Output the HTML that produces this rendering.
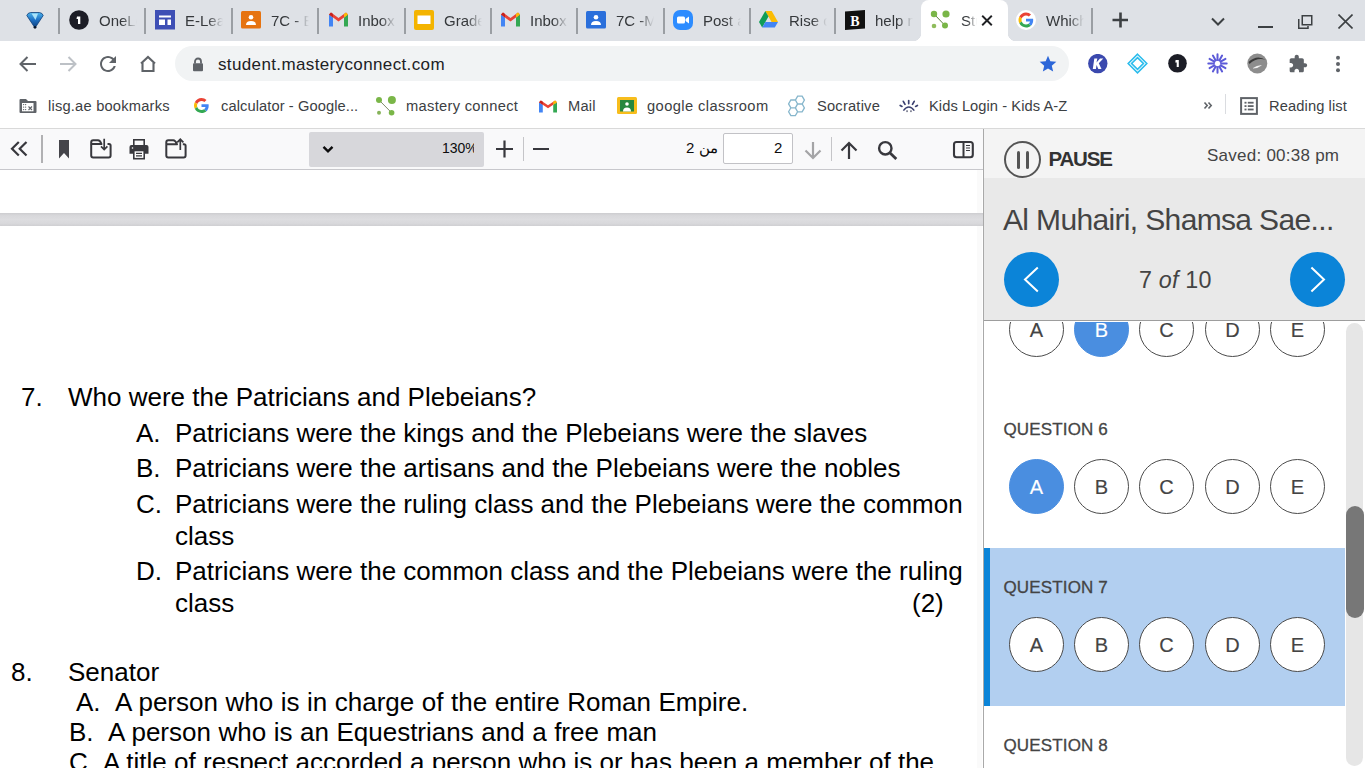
<!DOCTYPE html>
<html><head><meta charset="utf-8">
<style>
*{margin:0;padding:0;box-sizing:border-box}
html,body{width:1365px;height:768px;overflow:hidden;background:#fff;font-family:"Liberation Sans",sans-serif}
.a{position:absolute}
#tabs{left:0;top:0;width:1365px;height:41px;background:#dee1e6}
.sep{position:absolute;top:8px;width:2px;height:26px;background:#9a9ea3}
.tt{position:absolute;top:11px;height:20px;font-size:15px;line-height:20px;color:#35383b;white-space:nowrap;overflow:hidden;
 -webkit-mask-image:linear-gradient(to right,#000 60%,transparent 100%)}
.ico{position:absolute}
#toolbar{left:0;top:41px;width:1365px;height:46px;background:#fff}
#omni{left:175px;top:46px;width:894px;height:35px;border-radius:18px;background:#f1f3f4}
#bm{left:0;top:87px;width:1365px;height:42px;background:#fff;border-bottom:1px solid #d9d9d9}
.bt{position:absolute;top:97px;letter-spacing:0.2px;font-size:14.7px;line-height:18px;color:#3c4043;white-space:nowrap}
#pdftb{left:0;top:129px;width:983px;height:41px;background:#f9f9fa;border-bottom:1px solid #c8c8cc}
#pdf{left:0;top:170px;width:983px;height:598px;background:#fff}
#band{left:0;top:213px;width:983px;height:13px;background:linear-gradient(#cdcdd0,#d8d8db 20%,#dddde0 50%,#d8d8db 80%,#cfcfd2)}
.pt{position:absolute;font-size:26px;line-height:30px;color:#000;white-space:nowrap}
#panel{left:983px;top:129px;width:382px;height:639px;background:#fff;border-left:1px solid #a9a9a9}
#ph{left:984px;top:129px;width:381px;height:49px;background:#f4f4f4}
#pn{left:984px;top:178px;width:381px;height:143px;background:#e9e9e9;border-bottom:1px solid #9d9d9d}
.circ{position:absolute;width:55px;height:55px;border-radius:50%;border:1px solid #4a4a4a;background:#fff;color:#444;-webkit-text-stroke:0.15px currentColor;font-size:20px;line-height:54px;text-align:center}
.sel{background:#4a8ee0;border-color:#4a8ee0;color:#fff}
.ql{position:absolute;left:1003.5px;font-size:17px;line-height:20px;letter-spacing:0.15px;color:#444;white-space:nowrap;-webkit-text-stroke:0.3px #444}
</style></head><body>

<!-- TAB STRIP -->
<div id="tabs" class="a"></div>
<div class="a" style="left:921px;top:0;width:87px;height:41px;background:#fff;border-radius:8px 8px 0 0"></div>
<div class="a" style="left:913px;top:33px;width:8px;height:8px;background:radial-gradient(circle at 0 0, transparent 8px, #fff 8.5px)"></div>
<div class="a" style="left:1008px;top:33px;width:8px;height:8px;background:radial-gradient(circle at 100% 0, transparent 8px, #fff 8.5px)"></div>
<div class="sep" style="left:58px"></div>
<div class="sep" style="left:144px"></div>
<div class="sep" style="left:231px"></div>
<div class="sep" style="left:317px"></div>
<div class="sep" style="left:404px"></div>
<div class="sep" style="left:490px"></div>
<div class="sep" style="left:576px"></div>
<div class="sep" style="left:663px"></div>
<div class="sep" style="left:749px"></div>
<div class="sep" style="left:834px"></div>
<div class="sep" style="left:1091px"></div>
<div class="tt" style="left:99px;width:38px">OneLogin</div>
<div class="tt" style="left:185px;width:38px">E-Learning</div>
<div class="tt" style="left:271px;width:38px">7C - English</div>
<div class="tt" style="left:358px;width:38px">Inbox (12)</div>
<div class="tt" style="left:444px;width:38px">Grades</div>
<div class="tt" style="left:530px;width:38px">Inbox (3)</div>
<div class="tt" style="left:616px;width:38px">7C -Math</div>
<div class="tt" style="left:703px;width:38px">Post attendance</div>
<div class="tt" style="left:789px;width:38px">Rise of Rome</div>
<div class="tt" style="left:875px;width:38px">help me</div>
<div class="tt" style="left:1046px;width:38px">Which</div>
<div class="tt" style="left:961px;width:16px;-webkit-mask-image:linear-gradient(to right,#000 40%,transparent 100%)">Student</div>
<!-- pinned diamond -->
<svg class="ico" style="left:26px;top:11px" width="18" height="18" viewBox="0 0 18 18">
 <defs><linearGradient id="dg" x1="0" y1="0" x2="0" y2="1"><stop offset="0" stop-color="#4fb4ea"/><stop offset="0.45" stop-color="#1f74c8"/><stop offset="1" stop-color="#0b3a78"/></linearGradient></defs>
 <path d="M0.8 4.5 Q1.5 2 4.5 1.5 H13.5 Q16.5 2 17.2 4.5 L9 17 Z" fill="url(#dg)" stroke="#0d3f7a" stroke-width="0.8"/>
 <path d="M5.5 2.5 H12 L9.5 9 Z" fill="#bdf0ff" opacity="0.85"/>
 <circle cx="9" cy="16.3" r="1.4" fill="#07162b"/>
</svg>
<!-- OneLogin -->
<svg class="ico" style="left:69px;top:10px" width="20" height="20" viewBox="0 0 20 20"><circle cx="10" cy="10" r="9.8" fill="#1c1d26"/><path d="M8 6.5 H11.3 V14 H9 V9 H7.5 Z" fill="#fff"/></svg>
<!-- E-Learning -->
<svg class="ico" style="left:155px;top:10px" width="20" height="20" viewBox="0 0 20 20"><rect x="0" y="0" width="20" height="19.5" fill="#3e4fb5"/><rect x="4" y="5.5" width="12" height="2" fill="#fff"/><rect x="4" y="9.5" width="6" height="5.5" fill="#fff"/><rect x="12.5" y="9.5" width="3.5" height="5.5" fill="#fff"/></svg>
<!-- 7C orange classroom -->
<svg class="ico" style="left:241px;top:11px" width="20" height="18" viewBox="0 0 20 18"><rect x="0" y="0" width="20" height="17.5" rx="1.5" fill="#e67310"/><circle cx="10" cy="6.3" r="2.3" fill="#fff"/><path d="M5 14 Q5 10 10 10 Q15 10 15 14 Z" fill="#fff"/></svg>
<!-- gmail -->
<svg class="ico" style="left:329px;top:12px" width="19" height="15" viewBox="0 0 19 15">
 <path d="M0 2.5 V14.5 H4 V5.5 Z" fill="#4285f4"/><path d="M15 5.5 V14.5 H19 V2.5 Z" fill="#34a853"/>
 <path d="M0 2.5 L9.5 9.5 L19 2.5 L17 0.5 L9.5 6 L2 0.5 Z" fill="#ea4335"/><path d="M15 5.5 L19 2.5 L17 0.5 L15 2 Z" fill="#fbbc04"/><path d="M0 2.5 L4 5.5 V2 L2 0.5 Z" fill="#c5221f"/>
</svg>
<!-- slides yellow -->
<svg class="ico" style="left:414px;top:10px" width="20" height="20" viewBox="0 0 20 20"><rect x="0" y="0" width="20" height="20" rx="2" fill="#f4b400"/><rect x="3.5" y="5.5" width="13" height="8.5" fill="#fff"/></svg>
<svg class="ico" style="left:501px;top:12px" width="19" height="15" viewBox="0 0 19 15">
 <path d="M0 2.5 V14.5 H4 V5.5 Z" fill="#4285f4"/><path d="M15 5.5 V14.5 H19 V2.5 Z" fill="#34a853"/>
 <path d="M0 2.5 L9.5 9.5 L19 2.5 L17 0.5 L9.5 6 L2 0.5 Z" fill="#ea4335"/><path d="M15 5.5 L19 2.5 L17 0.5 L15 2 Z" fill="#fbbc04"/><path d="M0 2.5 L4 5.5 V2 L2 0.5 Z" fill="#c5221f"/>
</svg>
<!-- blue classroom -->
<svg class="ico" style="left:586px;top:11px" width="20" height="18" viewBox="0 0 20 18"><rect x="0" y="0" width="20" height="17.5" rx="1.5" fill="#2a6fdb"/><circle cx="10" cy="6.3" r="2.3" fill="#fff"/><path d="M5 14 Q5 10 10 10 Q15 10 15 14 Z" fill="#fff"/></svg>
<!-- zoom -->
<svg class="ico" style="left:673px;top:10px" width="20" height="20" viewBox="0 0 20 20"><rect x="0" y="0" width="20" height="20" rx="7" fill="#2d8cff"/><rect x="4" y="6.5" width="8" height="7" rx="1.5" fill="#fff"/><path d="M12.5 9 L16 6.5 V13.5 L12.5 11 Z" fill="#fff"/></svg>
<!-- drive -->
<svg class="ico" style="left:759px;top:11px" width="19" height="17" viewBox="0 0 19 17">
 <path d="M6.3 0 H12.7 L19 11 H12.6 Z" fill="#fbbc04"/><path d="M6.3 0 L0 11 L3.2 16.5 L9.5 5.5 Z" fill="#0f9d58"/><path d="M3.2 16.5 H15.8 L19 11 H6.4 Z" fill="#4285f4"/>
</svg>
<!-- B black -->
<svg class="ico" style="left:845px;top:10px" width="20" height="20" viewBox="0 0 20 20"><path d="M0 1.5 L20 0 V18.5 L0 20 Z" fill="#111"/><text x="10" y="15.5" text-anchor="middle" font-family="Liberation Serif" font-weight="bold" font-size="14" fill="#fff">B</text></svg>
<!-- mastery green (active) -->
<svg class="ico" style="left:930px;top:10px" width="21" height="20" viewBox="0 0 21 20"><path d="M4 4 L15 15.5" stroke="#5a7d3a" stroke-width="1" /><circle cx="4" cy="4" r="3.2" fill="#7ab648"/><circle cx="16" cy="4" r="3.6" fill="#7ab648"/><circle cx="4" cy="16" r="2.3" fill="#8fbc5c"/><circle cx="15" cy="15.5" r="3" fill="#7ab648"/></svg>
<!-- close X -->
<svg class="ico" style="left:981px;top:14.5px" width="12" height="11" viewBox="0 0 12 11"><path d="M1.2 0.8 L10.8 10.2 M10.8 0.8 L1.2 10.2" stroke="#202124" stroke-width="1.9"/></svg>
<!-- G -->
<svg class="ico" style="left:1016px;top:10px" width="20" height="20" viewBox="0 0 48 48"><circle cx="24" cy="24" r="24" fill="#fff"/><g transform="translate(6 6) scale(0.75)">
 <path fill="#EA4335" d="M24 9.5c3.54 0 6.71 1.22 9.21 3.6l6.85-6.85C35.9 2.38 30.47 0 24 0 14.62 0 6.51 5.38 2.56 13.22l7.98 6.19C12.43 13.72 17.74 9.5 24 9.5z"/>
 <path fill="#4285F4" d="M46.98 24.55c0-1.57-.15-3.09-.38-4.55H24v9.02h12.94c-.58 2.96-2.26 5.48-4.78 7.18l7.73 6c4.51-4.18 7.09-10.36 7.09-17.65z"/>
 <path fill="#FBBC05" d="M10.53 28.59c-.48-1.45-.76-2.99-.76-4.59s.27-3.14.76-4.59l-7.98-6.19C.92 16.46 0 20.12 0 24c0 3.88.92 7.54 2.56 10.78l7.97-6.19z"/>
 <path fill="#34A853" d="M24 48c6.48 0 11.93-2.13 15.89-5.81l-7.73-6c-2.15 1.45-4.92 2.3-8.16 2.3-6.26 0-11.57-4.22-13.47-9.91l-7.98 6.19C6.51 42.62 14.62 48 24 48z"/></g></svg>
<!-- new tab + -->
<svg class="ico" style="left:1112px;top:12px" width="17" height="16" viewBox="0 0 17 16"><path d="M8.5 0.5 V15.5 M0.5 8 H16" stroke="#3c4043" stroke-width="2.6"/></svg>
<!-- tab search chevron -->
<svg class="ico" style="left:1211px;top:17px" width="14" height="9" viewBox="0 0 14 9"><path d="M1 1.5 L7 7.5 L13 1.5" fill="none" stroke="#3c4043" stroke-width="2"/></svg>
<!-- window controls -->
<div class="a" style="left:1258px;top:26px;width:15px;height:1.5px;background:#3c4043"></div>
<svg class="ico" style="left:1298px;top:15px" width="15" height="14" viewBox="0 0 15 14"><path d="M0.75 4 V13.25 H10 V11" fill="none" stroke="#3c4043" stroke-width="1.5"/><rect x="4.25" y="0.75" width="9.5" height="9" fill="none" stroke="#3c4043" stroke-width="1.5"/></svg>
<svg class="ico" style="left:1338px;top:14px" width="15" height="15" viewBox="0 0 15 15"><path d="M0.5 0.5 L14.5 14.5 M14.5 0.5 L0.5 14.5" stroke="#3c4043" stroke-width="1.6"/></svg>

<!-- TOOLBAR -->
<div id="toolbar" class="a"></div>
<div id="omni" class="a"></div>

<!-- nav icons -->
<svg class="ico" style="left:16px;top:52px" width="24" height="24" viewBox="0 0 24 24"><path d="M20 12 H5.5 M11.5 5 L4.5 12 L11.5 19" fill="none" stroke="#5f6368" stroke-width="2"/></svg>
<svg class="ico" style="left:56px;top:52px" width="24" height="24" viewBox="0 0 24 24"><path d="M4 12 H18.5 M12.5 5 L19.5 12 L12.5 19" fill="none" stroke="#bdc1c6" stroke-width="2"/></svg>
<svg class="ico" style="left:96px;top:52px" width="24" height="24" viewBox="0 0 24 24"><path d="M17.65 6.35C16.2 4.9 14.21 4 12 4c-4.42 0-7.99 3.58-7.99 8s3.57 8 7.99 8c3.73 0 6.84-2.55 7.73-6h-2.08c-.82 2.33-3.04 4-5.65 4-3.31 0-6-2.69-6-6s2.69-6 6-6c1.66 0 3.140.69 4.220 1.78L13 11h7V4l-2.35 2.35z" fill="#5f6368"/></svg>
<svg class="ico" style="left:136px;top:52px" width="24" height="24" viewBox="0 0 24 24"><path d="M5 11.5 L12 5 L19 11.5 M6.5 10 V19 H17.5 V10" fill="none" stroke="#5f6368" stroke-width="2.1" stroke-linejoin="miter"/></svg>
<!-- lock -->
<svg class="ico" style="left:192px;top:57px" width="12" height="15" viewBox="0 0 12 15"><path d="M3 6.5 V4.5 A3 3 0 0 1 9 4.5 V6.5" fill="none" stroke="#5f6368" stroke-width="1.8"/><rect x="1" y="6.3" width="10" height="8" rx="1" fill="#5f6368"/></svg>
<!-- star -->
<svg class="ico" style="left:1038px;top:54px" width="20" height="20" viewBox="0 0 24 24"><path d="M12 17.27L18.18 21l-1.64-7.030L22 9.24l-7.19-.61L12 2 9.19 8.63 2 9.24l5.46 4.73L5.82 21z" fill="#2c66d8"/></svg>
<!-- ext K -->
<svg class="ico" style="left:1088px;top:54px" width="20" height="20" viewBox="0 0 20 20"><circle cx="9.8" cy="9.6" r="9.7" fill="#3b49ae"/><path d="M6.3 4.5 H9.3 L8.5 8.5 L12 4.5 H15.3 L10.8 9.3 L13.5 15 H10.3 L8.6 11 L7.9 15 H4.8 Z" fill="#fff"/></svg>
<!-- ext diamond -->
<svg class="ico" style="left:1127px;top:53px" width="21" height="21" viewBox="0 0 21 21"><path d="M10.5 1.2 L19.8 10.5 L10.5 19.8 L1.2 10.5 Z" fill="none" stroke="#2bbcec" stroke-width="1.6"/><path d="M10.5 4.6 L16.4 10.5 L10.5 16.4 L4.6 10.5 Z" fill="none" stroke="#2bbcec" stroke-width="1.6"/></svg>
<!-- ext 1 -->
<svg class="ico" style="left:1168px;top:54px" width="19" height="19" viewBox="0 0 19 19"><circle cx="9.5" cy="9.3" r="9.3" fill="#1c1d26"/><path d="M7.6 6 H10.8 V13 H8.7 V8.4 H7.3 Z" fill="#fff"/></svg>
<!-- ext asterisk -->
<svg class="ico" style="left:1207px;top:53px" width="21" height="21" viewBox="0 0 21 21"><path d="M14.10 10.50 L19.70 10.50 M13.62 12.30 L18.47 15.10 M12.30 13.62 L15.10 18.47 M10.50 14.10 L10.50 19.70 M8.70 13.62 L5.90 18.47 M7.38 12.30 L2.53 15.10 M6.90 10.50 L1.30 10.50 M7.38 8.70 L2.53 5.90 M8.70 7.38 L5.90 2.53 M10.50 6.90 L10.50 1.30 M12.30 7.38 L15.10 2.53 M13.62 8.70 L18.47 5.90" stroke="#5c5ad8" stroke-width="2" stroke-linecap="round"/></svg>
<!-- ext grey -->
<svg class="ico" style="left:1247px;top:53px" width="21" height="21" viewBox="0 0 21 21"><circle cx="10.3" cy="10.5" r="10" fill="#8d8d8d"/><path d="M1.5 9 Q10 1 19 7 Q10 4 2.5 11 Z" fill="#3a3a3a"/><path d="M6 15 Q11 11.5 15 12.3 Q11 15.5 6 15.5 Z" fill="#f0f0f0"/></svg>
<!-- puzzle -->
<svg class="ico" style="left:1288px;top:54px" width="20" height="20" viewBox="0 0 24 24"><path d="M20.5 11H19V7c0-1.1-.9-2-2-2h-4V3.5C13 2.12 11.88 1 10.5 1S8 2.12 8 3.5V5H4c-1.1 0-1.99.9-1.99 2v3.8H3.5c1.49 0 2.7 1.21 2.7 2.7s-1.21 2.7-2.7 2.7H2V20c0 1.1.9 2 2 2h3.8v-1.5c0-1.49 1.21-2.7 2.7-2.7 1.49 0 2.7 1.21 2.7 2.7V22H17c1.1 0 2-.9 2-2v-4h1.5c1.38 0 2.5-1.12 2.5-2.5S21.88 11 20.5 11z" fill="#5f6368"/></svg>
<!-- menu dots -->
<svg class="ico" style="left:1335px;top:55px" width="6" height="18" viewBox="0 0 6 18"><circle cx="3" cy="2.7" r="2" fill="#5f6368"/><circle cx="3" cy="9" r="2" fill="#5f6368"/><circle cx="3" cy="15.3" r="2" fill="#5f6368"/></svg>
<div class="a" style="left:218px;top:54.5px;font-size:17px;line-height:20px;letter-spacing:0.37px;color:#202124">student.masteryconnect.com</div>

<!-- BOOKMARKS -->
<div id="bm" class="a"></div>

<!-- bookmark icons -->
<svg class="ico" style="left:19px;top:98px" width="18" height="16" viewBox="0 0 18 16"><path d="M1.5 1 H7 L9 3 H16.5 Q17.5 3 17.5 4 V14 Q17.5 15 16.5 15 H1.5 Q0.5 15 0.5 14 V2 Q0.5 1 1.5 1 Z" fill="#5f6368"/><rect x="3" y="5" width="11.5" height="8.3" fill="#fff"/>
<g fill="#5f6368"><circle cx="4.6" cy="6.6" r="0.7"/><circle cx="6.6" cy="6.6" r="0.7"/><circle cx="4.6" cy="9.1" r="0.7"/><circle cx="6.6" cy="9.1" r="0.7"/><circle cx="4.6" cy="11.6" r="0.7"/><circle cx="6.6" cy="11.6" r="0.7"/></g><path d="M9.5 8.5 L13 12 M13 8.5 L9.5 12" stroke="#5f6368" stroke-width="1.1"/></svg>
<svg class="ico" style="left:193.5px;top:98px" width="15" height="15" viewBox="0 0 48 48"><g>
 <path fill="#EA4335" d="M24 9.5c3.54 0 6.71 1.22 9.21 3.6l6.85-6.85C35.9 2.38 30.47 0 24 0 14.62 0 6.51 5.38 2.56 13.22l7.98 6.19C12.43 13.72 17.74 9.5 24 9.5z"/>
 <path fill="#4285F4" d="M46.98 24.55c0-1.57-.15-3.090-.38-4.55H24v9.02h12.94c-.58 2.96-2.26 5.48-4.78 7.18l7.73 6c4.51-4.18 7.09-10.36 7.09-17.65z"/>
 <path fill="#FBBC05" d="M10.53 28.59c-.48-1.450-.76-2.99-.76-4.59s.27-3.14.76-4.59l-7.98-6.19C.92 16.46 0 20.12 0 24c0 3.88.92 7.54 2.56 10.78l7.97-6.19z"/>
 <path fill="#34A853" d="M24 48c6.48 0 11.93-2.13 15.89-5.81l-7.73-6c-2.15 1.45-4.92 2.3-8.16 2.3-6.26 0-11.57-4.22-13.47-9.91l-7.98 6.19C6.51 42.62 14.62 48 24 48z"/></g></svg>
<svg class="ico" style="left:374px;top:95px" width="22" height="22" viewBox="0 0 22 22"><path d="M5 5 L17.6 17.75" stroke="#7d8c6a" stroke-width="1"/><circle cx="5" cy="5" r="3" fill="#7ab648"/><circle cx="17.9" cy="5" r="4" fill="#7ab648"/><circle cx="5" cy="17.75" r="2" fill="#86b35a"/><circle cx="17.6" cy="17.75" r="2.8" fill="#7ab648"/></svg>
<svg class="ico" style="left:539px;top:100px" width="18" height="13" viewBox="0 0 19 15" preserveAspectRatio="none">
 <path d="M0 2.5 V14.5 H4 V5.5 Z" fill="#4285f4"/><path d="M15 5.5 V14.5 H19 V2.5 Z" fill="#34a853"/>
 <path d="M0 2.5 L9.5 9.5 L19 2.5 L17 0.5 L9.5 6 L2 0.5 Z" fill="#ea4335"/><path d="M15 5.5 L19 2.5 L17 0.5 L15 2 Z" fill="#fbbc04"/><path d="M0 2.5 L4 5.5 V2 L2 0.5 Z" fill="#c5221f"/>
</svg>
<svg class="ico" style="left:617px;top:97px" width="20" height="17" viewBox="0 0 20 17"><rect x="0" y="0" width="20" height="17" rx="1.5" fill="#f7bd1c"/><rect x="3" y="3" width="14" height="11.5" fill="#27873f"/><circle cx="10" cy="7" r="1.8" fill="#fff"/><path d="M6 14.5 Q6 10.5 10 10.5 Q14 10.5 14 14.5 Z" fill="#fff"/></svg>
<svg class="ico" style="left:786px;top:94px" width="22" height="24" viewBox="0 0 22 24"><path d="M9.40 6.10 L11.65 2.20 L16.15 2.20 L18.40 6.10 L16.15 10.00 L11.65 10.00 Z M9.40 13.90 L11.65 10.00 L16.15 10.00 L18.40 13.90 L16.15 17.80 L11.65 17.80 Z M2.60 9.90 L4.85 6.00 L9.35 6.00 L11.60 9.90 L9.35 13.80 L4.85 13.80 Z M2.60 17.70 L4.85 13.80 L9.35 13.80 L11.60 17.70 L9.35 21.60 L4.85 21.60 Z" fill="none" stroke="#86b6cc" stroke-width="1.3"/></svg>
<svg class="ico" style="left:896px;top:96px" width="26" height="20" viewBox="0 0 26 20"><path d="M12.70 4.60 L12.70 7.60 M7.30 5.30 L9.00 8.30 M18.20 5.30 L16.50 8.30 M4.20 9.40 L6.00 10.40 M21.40 9.40 L19.60 10.40" stroke="#3b4070" stroke-width="1.7" stroke-linecap="round"/><path d="M7.40 14.60 Q12.80 7.60 18.30 14.60" fill="none" stroke="#3b4070" stroke-width="1.5"/><rect x="10.299999999999955" y="14.299999999999997" width="1.5" height="1.8" fill="#6a6d80"/><rect x="14.200000000000045" y="14.299999999999997" width="1.5" height="1.8" fill="#6a6d80"/></svg>
<svg class="ico" style="left:1203px;top:101px" width="10" height="9" viewBox="0 0 10 9"><path d="M1.5 1.5 L4.2 4.5 L1.5 7.5 M5.5 1.5 L8.2 4.5 L5.5 7.5" fill="none" stroke="#5f6368" stroke-width="1.6"/></svg>
<div class="a" style="left:1225px;top:94px;width:1px;height:20px;background:#dadce0"></div>
<svg class="ico" style="left:1240px;top:97px" width="18" height="18" viewBox="0 0 18 18"><rect x="1.1" y="1.1" width="15.8" height="15.8" fill="none" stroke="#5f6368" stroke-width="2"/><g fill="#5f6368"><rect x="4.5" y="4.8" width="2" height="1.8"/><rect x="4.5" y="8.2" width="2" height="1.8"/><rect x="4.5" y="11.6" width="2" height="1.8"/><rect x="7.8" y="4.8" width="5.8" height="1.8"/><rect x="7.8" y="8.2" width="5.8" height="1.8"/><rect x="7.8" y="11.6" width="5.8" height="1.8"/></g></svg>
<div class="bt" style="left:48px">lisg.ae bookmarks</div>
<div class="bt" style="left:221px;letter-spacing:0.08px">calculator - Google...</div>
<div class="bt" style="left:406px;letter-spacing:0.3px">mastery connect</div>
<div class="bt" style="left:568px">Mail</div>
<div class="bt" style="left:647px;letter-spacing:0.4px">google classroom</div>
<div class="bt" style="left:817px">Socrative</div>
<div class="bt" style="left:929px;letter-spacing:0.05px">Kids Login - Kids A-Z</div>
<div class="bt" style="left:1269px;letter-spacing:0.1px">Reading list</div>

<!-- PDF TOOLBAR -->
<div id="pdftb" class="a"></div>

<!-- pdf toolbar icons -->
<svg class="ico" style="left:9px;top:140px" width="20" height="18" viewBox="0 0 20 18"><path d="M9.8 2 L3 8.7 L9.8 15.5 M17.5 2 L10.7 8.7 L17.5 15.5" fill="none" stroke="#38383d" stroke-width="2.2"/></svg>
<div class="a" style="left:41px;top:135px;width:2px;height:28px;background:#b1b1b3"></div>
<svg class="ico" style="left:59px;top:140px" width="10" height="19" viewBox="0 0 10 19"><path d="M0 0 H10 V18.5 L5 13 L0 18.5 Z" fill="#45454a"/></svg>
<svg class="ico" style="left:90px;top:138px" width="22" height="21" viewBox="0 0 22 21"><path d="M1.2 6 V17.6 Q1.2 19.6 3.2 19.6 H18.6 Q20.6 19.6 20.6 17.6 V7.5 Q20.6 6 19 6 H17.5" fill="none" stroke="#38383d" stroke-width="2"/><path d="M1.2 6.2 V4.2 Q1.2 2.2 3.2 2.2 H8 Q10 2.2 11.5 6 H1.2" fill="none" stroke="#38383d" stroke-width="2" stroke-linejoin="round"/><path d="M14.2 0.8 V11.5 M11 8.3 L14.2 11.5 L17.4 8.3" fill="none" stroke="#38383d" stroke-width="1.7"/></svg>
<svg class="ico" style="left:128px;top:138px" width="22" height="22" viewBox="0 0 22 22"><rect x="5.8" y="1.8" width="10.4" height="6" fill="none" stroke="#38383d" stroke-width="1.6"/><path d="M1.5 9 Q1.5 7 3.5 7 H18.5 Q20.5 7 20.5 9 V15.7 H1.5 Z" fill="#38383d"/><rect x="5.8" y="12.5" width="10.4" height="8.2" fill="#fff" stroke="#38383d" stroke-width="1.6"/><path d="M8 15.3 H14 M8 17.8 H14" stroke="#38383d" stroke-width="1.2"/><circle cx="4.5" cy="10" r="0.8" fill="#fff"/></svg>
<svg class="ico" style="left:165px;top:138px" width="22" height="21" viewBox="0 0 22 21"><path d="M1.3 6.3 V17.4 Q1.3 19.4 3.3 19.4 H18.6 Q20.6 19.4 20.6 17.4 V7.8 Q20.6 6.3 19 6.3 H17.8" fill="none" stroke="#38383d" stroke-width="2"/><path d="M1.3 6.5 V4.3 Q1.3 2.3 3.3 2.3 H8.3 Q10.3 2.3 12 6.3 H1.3" fill="none" stroke="#38383d" stroke-width="2" stroke-linejoin="round"/><path d="M15.3 12 V1.3 M12.2 4.4 L15.3 1.3 L18.4 4.4" fill="none" stroke="#38383d" stroke-width="1.7"/></svg>
<svg class="ico" style="left:495px;top:140px" width="19" height="18" viewBox="0 0 19 18"><path d="M9.5 0.5 V17.5 M1 9 H18" stroke="#38383d" stroke-width="2.2"/></svg>
<div class="a" style="left:523px;top:137px;width:1px;height:24px;background:#c5c5c8"></div>
<div class="a" style="left:533px;top:147.5px;width:16px;height:2.2px;background:#38383d"></div>
<svg class="ico" style="left:803px;top:141px" width="20" height="19" viewBox="0 0 20 19"><path d="M10 1 V17 M2.5 9.5 L10 17 L17.5 9.5" fill="none" stroke="#a4a4a6" stroke-width="2.2"/></svg>
<div class="a" style="left:831px;top:137px;width:1px;height:24px;background:#c5c5c8"></div>
<svg class="ico" style="left:839px;top:141px" width="20" height="19" viewBox="0 0 20 19"><path d="M10 18 V2 M2.5 9.5 L10 2 L17.5 9.5" fill="none" stroke="#38383d" stroke-width="2.2"/></svg>
<svg class="ico" style="left:877px;top:140px" width="22" height="20" viewBox="0 0 22 20"><circle cx="8.3" cy="8.3" r="6.2" fill="none" stroke="#38383d" stroke-width="2.4"/><path d="M12.8 12.8 L19.3 19" stroke="#38383d" stroke-width="2.8"/></svg>
<svg class="ico" style="left:952px;top:140px" width="22" height="19" viewBox="0 0 22 19"><rect x="2" y="2" width="18.8" height="15.3" rx="2.5" fill="none" stroke="#38383d" stroke-width="2.1"/><path d="M11.5 2 V17" stroke="#38383d" stroke-width="2"/><path d="M14 5.5 H18 M14 8 H18 M14 10.5 H18" stroke="#38383d" stroke-width="1.2"/></svg>
<div class="a" style="left:309px;top:132px;width:175px;height:35px;background:#d7d7db;border-radius:2px"></div>
<svg class="ico" style="left:322px;top:145px" width="12" height="9" viewBox="0 0 12 9"><path d="M1.5 1.8 L6 6.3 L10.5 1.8" fill="none" stroke="#0c0c0d" stroke-width="2.4"/></svg>
<div class="a" style="left:442px;top:140px;width:32px;overflow:hidden;white-space:nowrap;font-size:14px;line-height:16px;color:#0c0c0d">130%</div>
<div class="a" style="left:723px;top:133px;width:70px;height:31px;background:#fff;border:1px solid #c2c2c6;border-radius:2px"></div>
<div class="a" style="left:774px;top:139px;font-size:15px;line-height:18px;color:#0c0c0d">2</div>
<div class="a" style="left:686px;top:139px;font-size:15px;line-height:18px;color:#0c0c0d">من 2</div>

<!-- PDF CONTENT -->
<div id="pdf" class="a"></div>
<div class="a" style="left:977px;top:170px;width:5px;height:598px;background:#fafafa"></div>
<div id="band" class="a"></div>

<div class="pt" style="left:21px;top:382px">7.</div>
<div class="pt" style="left:68px;top:382px">Who were the Patricians and Plebeians?</div>
<div class="pt" style="left:136px;top:418px">A.</div>
<div class="pt" style="left:175px;top:418px">Patricians were the kings and the Plebeians were the slaves</div>
<div class="pt" style="left:136px;top:453px">B.</div>
<div class="pt" style="left:175px;top:453px">Patricians were the artisans and the Plebeians were the nobles</div>
<div class="pt" style="left:136px;top:489px">C.</div>
<div class="pt" style="left:175px;top:489px">Patricians were the ruling class and the Plebeians were the common</div>
<div class="pt" style="left:175px;top:521px">class</div>
<div class="pt" style="left:136px;top:556px">D.</div>
<div class="pt" style="left:175px;top:556px">Patricians were the common class and the Plebeians were the ruling</div>
<div class="pt" style="left:175px;top:588px">class</div>
<div class="pt" style="left:912px;top:588px">(2)</div>
<div class="pt" style="left:11px;top:657px">8.</div>
<div class="pt" style="left:68px;top:657px">Senator</div>
<div class="pt" style="left:76px;top:687px">A.</div>
<div class="pt" style="left:115px;top:687px;word-spacing:0.3px">A person who is in charge of the entire Roman Empire.</div>
<div class="pt" style="left:69px;top:717px">B.</div>
<div class="pt" style="left:108px;top:717px;word-spacing:0.3px">A person who is an Equestrians and a free man</div>
<div class="pt" style="left:69px;top:747px">C.</div>
<div class="pt" style="left:103px;top:747px;word-spacing:0.1px">A title of respect accorded a person who is or has been a member of the</div>

<!-- PANEL -->
<div id="panel" class="a"></div>
<div id="ph" class="a"></div>
<div id="pn" class="a"></div>

<!-- pause -->
<div class="a" style="left:1004px;top:141px;width:37px;height:37px;border-radius:50%;border:2.8px solid #555"></div>
<div class="a" style="left:1016.5px;top:150.5px;width:3.5px;height:18px;border-radius:2px;background:#555"></div>
<div class="a" style="left:1025.5px;top:150.5px;width:3.5px;height:18px;border-radius:2px;background:#555"></div>
<div class="a" style="left:1048.5px;top:146.5px;font-size:20.5px;line-height:24px;letter-spacing:-1.2px;font-weight:bold;color:#333">PAUSE</div>
<div class="a" style="left:1207px;top:145px;font-size:17px;line-height:22px;letter-spacing:0.25px;color:#444">Saved: 00:38 pm</div>
<div class="a" style="left:1003px;top:201.5px;font-size:30px;line-height:36px;letter-spacing:-0.65px;color:#444;white-space:nowrap">Al Muhairi, Shamsa Sae...</div>
<!-- nav -->
<div class="a" style="left:1004px;top:252px;width:55px;height:55px;border-radius:50%;background:#0b84d8"></div>
<svg class="a" style="left:1004px;top:252px" width="55" height="55"><path d="M33.8 15.5 L21 27.5 L33.8 39.5" fill="none" stroke="#fff" stroke-width="2"/></svg>
<div class="a" style="left:1290px;top:252px;width:55px;height:55px;border-radius:50%;background:#0b84d8"></div>
<svg class="a" style="left:1290px;top:252px" width="55" height="55"><path d="M21.4 15.5 L34 27.5 L21.4 39.5" fill="none" stroke="#fff" stroke-width="2"/></svg>
<div class="a" style="left:1139px;top:266.5px;font-size:23.3px;line-height:26px;letter-spacing:0.2px;color:#444;white-space:nowrap">7 <i>of</i> 10</div>
<!-- list -->
<div class="a" style="left:984px;top:322px;width:361px;height:446px;overflow:hidden">
 <div class="a" style="left:0;top:226px;width:361px;height:158px;background:#b2cff0"></div>
 <div class="a" style="left:0;top:226px;width:6px;height:158px;background:#0b84d8"></div>
</div>
<div class="a" style="left:984px;top:322px;width:361px;height:446px;overflow:hidden">
 <div class="circ" style="left:25px;top:-20px">A</div>
 <div class="circ sel" style="left:90px;top:-20px">B</div>
 <div class="circ" style="left:155px;top:-20px">C</div>
 <div class="circ" style="left:221px;top:-20px">D</div>
 <div class="circ" style="left:286px;top:-20px">E</div>
 <div class="circ sel" style="left:25px;top:137px">A</div>
 <div class="circ" style="left:90px;top:137px">B</div>
 <div class="circ" style="left:155px;top:137px">C</div>
 <div class="circ" style="left:221px;top:137px">D</div>
 <div class="circ" style="left:286px;top:137px">E</div>
 <div class="circ" style="left:25px;top:295px">A</div>
 <div class="circ" style="left:90px;top:295px">B</div>
 <div class="circ" style="left:155px;top:295px">C</div>
 <div class="circ" style="left:221px;top:295px">D</div>
 <div class="circ" style="left:286px;top:295px">E</div>
</div>
<div class="ql" style="top:420px">QUESTION 6</div>
<div class="ql" style="top:578px">QUESTION 7</div>
<div class="ql" style="top:736px">QUESTION 8</div>
<!-- scrollbar -->
<div class="a" style="left:1346px;top:323px;width:17px;height:443px;border-radius:9px;background:#e6e6e6"></div>
<div class="a" style="left:1346px;top:506px;width:18px;height:112px;border-radius:9px;background:#777"></div>

</body></html>
